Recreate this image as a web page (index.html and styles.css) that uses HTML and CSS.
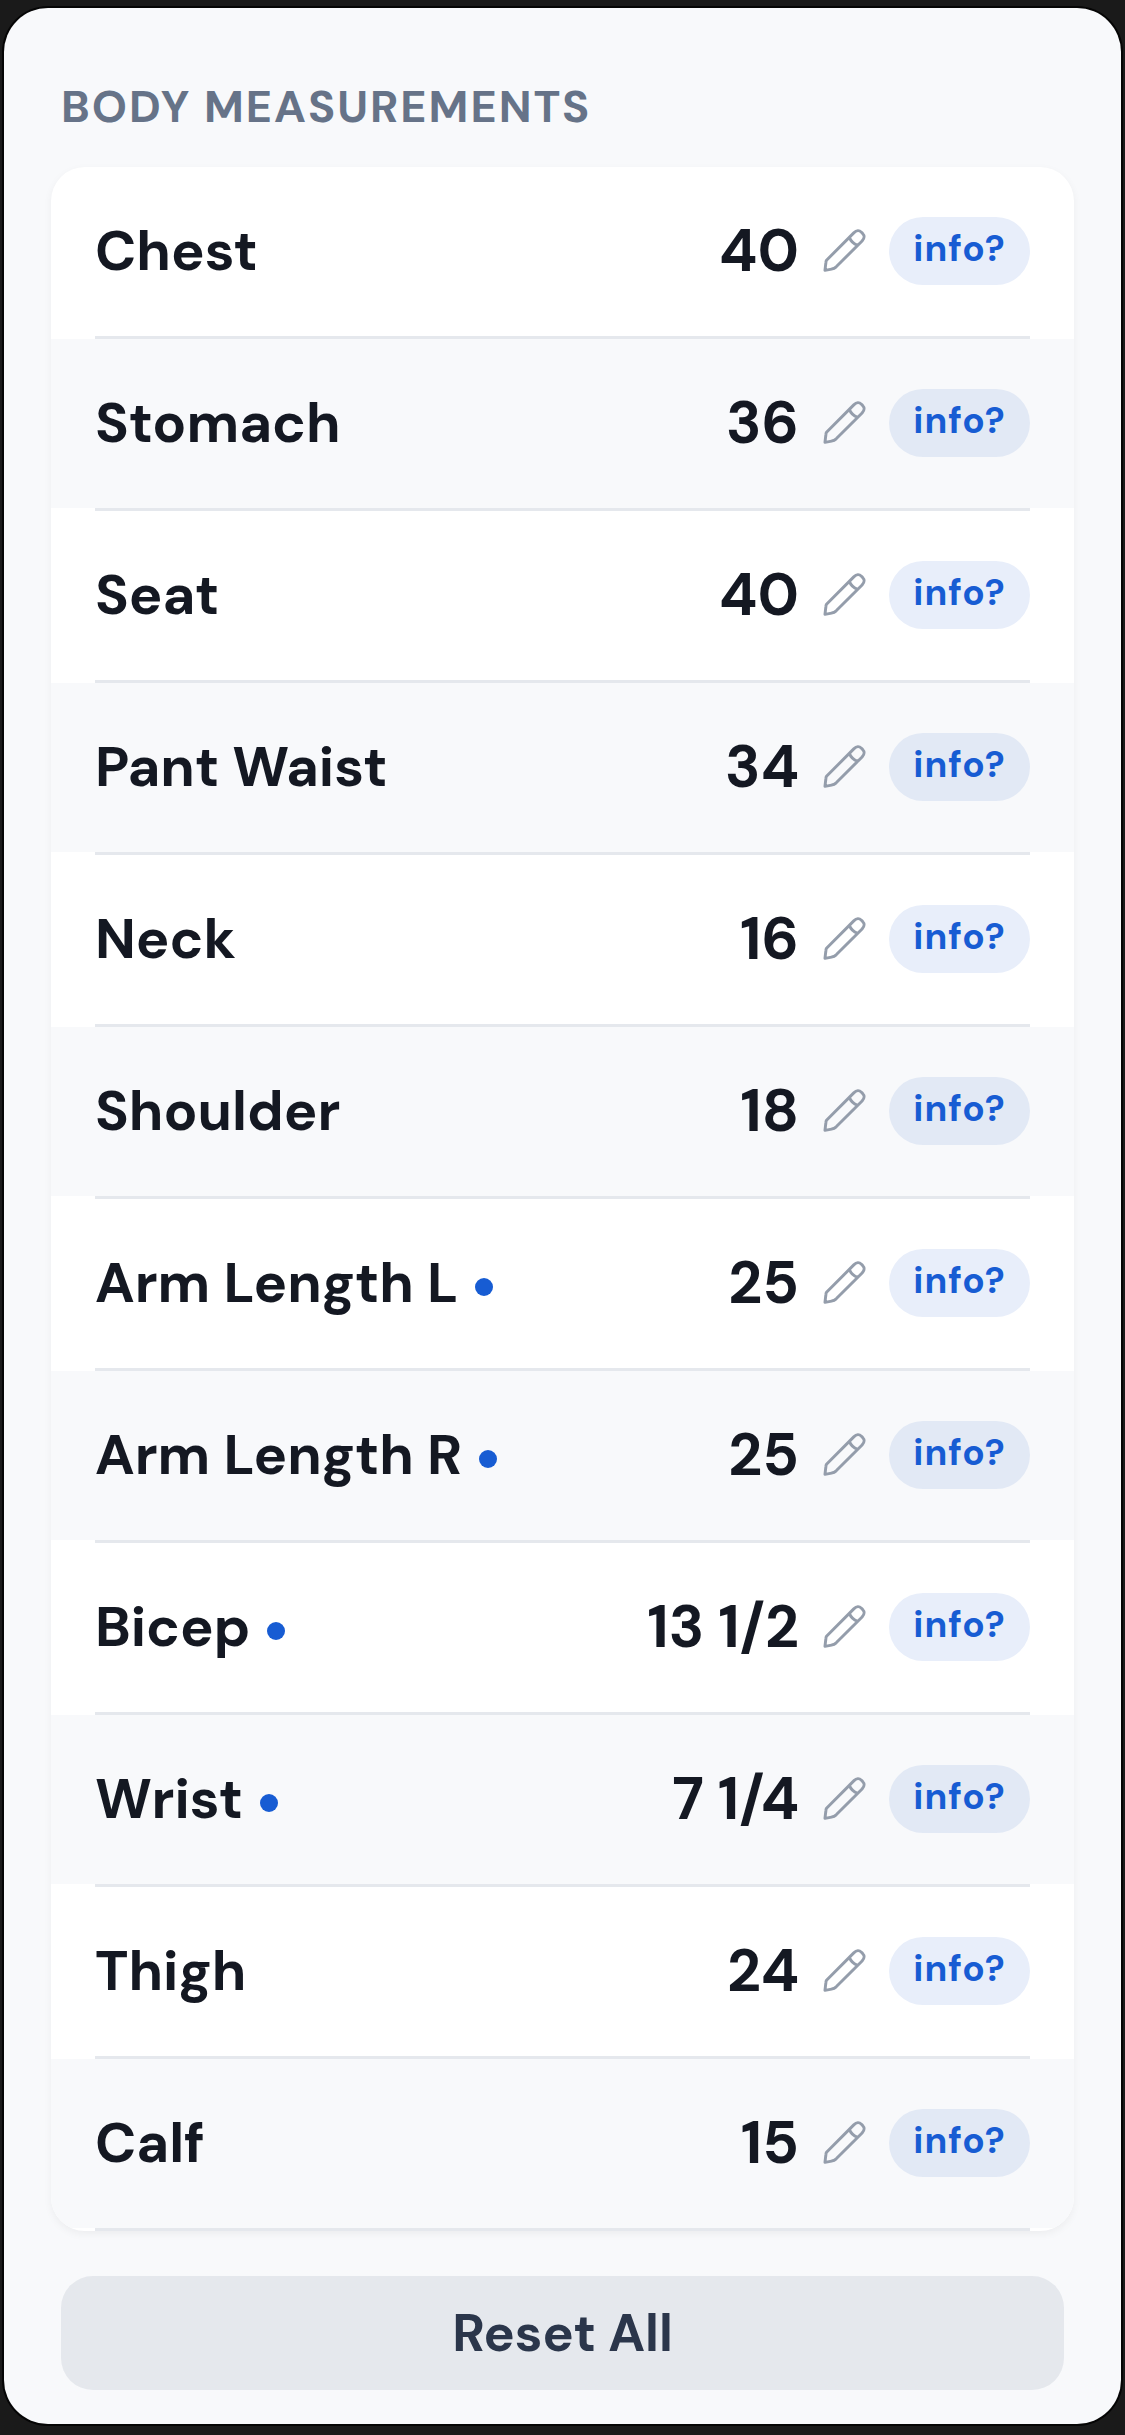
FILE: index.html
```html
<!DOCTYPE html>
<html lang="en">
<head>
  <meta charset="UTF-8" />
  <meta name="viewport" content="width=device-width, initial-scale=1" />
  <title>Body Measurements</title>
  <link rel="stylesheet" href="styles.css">
</head>
<body>
  <!-- Shared pencil icon -->
  <svg class="sprite" aria-hidden="true">
    <symbol id="pencil" viewBox="0 0 44 44">
      <path d="M3.6 32 L31.5 4 C34.5 1 37 1 39.3 3.3 L40.5 4.5 C42.8 7 42.8 9 40 12.2 L13.5 38.7 Q11.5 40.6 8.8 41 L2 42.3 L3 34 Q3.1 32.6 3.6 32 Z M27 8.5 Q29 14.5 35.5 16.7" />
    </symbol>
  </svg>

  <main class="panel">
    <h1>BODY MEASUREMENTS</h1>

    <ul class="measurements">
      <li>
        <div class="row">
          <span class="name">Chest</span>
          <span class="value">40</span>
          <button class="edit" aria-label="Edit Chest"><svg><use href="#pencil" /></svg></button>
          <button class="info">info?</button>
        </div>
      </li>
      <li>
        <div class="row">
          <span class="name">Stomach</span>
          <span class="value">36</span>
          <button class="edit" aria-label="Edit Stomach"><svg><use href="#pencil" /></svg></button>
          <button class="info">info?</button>
        </div>
      </li>
      <li>
        <div class="row">
          <span class="name">Seat</span>
          <span class="value">40</span>
          <button class="edit" aria-label="Edit Seat"><svg><use href="#pencil" /></svg></button>
          <button class="info">info?</button>
        </div>
      </li>
      <li>
        <div class="row">
          <span class="name">Pant Waist</span>
          <span class="value">34</span>
          <button class="edit" aria-label="Edit Pant Waist"><svg><use href="#pencil" /></svg></button>
          <button class="info">info?</button>
        </div>
      </li>
      <li>
        <div class="row">
          <span class="name">Neck</span>
          <span class="value">16</span>
          <button class="edit" aria-label="Edit Neck"><svg><use href="#pencil" /></svg></button>
          <button class="info">info?</button>
        </div>
      </li>
      <li>
        <div class="row">
          <span class="name">Shoulder</span>
          <span class="value">18</span>
          <button class="edit" aria-label="Edit Shoulder"><svg><use href="#pencil" /></svg></button>
          <button class="info">info?</button>
        </div>
      </li>
      <li>
        <div class="row">
          <span class="name dot">Arm Length L</span>
          <span class="value">25</span>
          <button class="edit" aria-label="Edit Arm Length L"><svg><use href="#pencil" /></svg></button>
          <button class="info">info?</button>
        </div>
      </li>
      <li>
        <div class="row">
          <span class="name dot">Arm Length R</span>
          <span class="value">25</span>
          <button class="edit" aria-label="Edit Arm Length R"><svg><use href="#pencil" /></svg></button>
          <button class="info">info?</button>
        </div>
      </li>
      <li>
        <div class="row">
          <span class="name dot">Bicep</span>
          <span class="value">13 1/2</span>
          <button class="edit" aria-label="Edit Bicep"><svg><use href="#pencil" /></svg></button>
          <button class="info">info?</button>
        </div>
      </li>
      <li>
        <div class="row">
          <span class="name dot">Wrist</span>
          <span class="value">7 1/4</span>
          <button class="edit" aria-label="Edit Wrist"><svg><use href="#pencil" /></svg></button>
          <button class="info">info?</button>
        </div>
      </li>
      <li>
        <div class="row">
          <span class="name">Thigh</span>
          <span class="value">24</span>
          <button class="edit" aria-label="Edit Thigh"><svg><use href="#pencil" /></svg></button>
          <button class="info">info?</button>
        </div>
      </li>
      <li>
        <div class="row">
          <span class="name">Calf</span>
          <span class="value">15</span>
          <button class="edit" aria-label="Edit Calf"><svg><use href="#pencil" /></svg></button>
          <button class="info">info?</button>
        </div>
      </li>
    </ul>

    <button class="reset">Reset All</button>
  </main>
</body>
</html>
```
FILE: styles.css
```css
* {
  box-sizing: border-box;
}

body {
  margin: 0;
  padding: 8px 4px 10px;
  background: #1a1a1a;
  font-family: "DM Sans", Inter, sans-serif;
  font-optical-sizing: none;
  color: #141822;
}

.sprite {
  display: none;
}

button {
  padding: 0;
  border: none;
  background: none;
  font-family: inherit;
  cursor: pointer;
}

.panel {
  padding: 73px 57px 34px;
  border-radius: 44px;
  background: #f8f9fb;
  box-shadow: 0 0 0 2px #050505;
}

h1 {
  margin: 0;
  font-size: 45px;
  line-height: 52px;
  font-weight: 700;
  letter-spacing: 2px;
  color: #667388;
}

.measurements {
  margin: 34px -10px 45px;
  padding: 0;
  list-style: none;
  border-radius: 34px;
  background: #fff;
  box-shadow: 0 3px 9px rgba(0, 0, 0, 0.05);
  overflow: hidden;
}

.row {
  display: flex;
  align-items: center;
  min-height: 169px;
  padding: 0 44px 2px;
}

li:nth-child(even) .row {
  background: #f8f9fb;
}

/* inset divider under each row */
li::after {
  content: "";
  display: block;
  height: 3px;
  margin: 0 44px;
  background: #e5e8ed;
}

.name {
  display: flex;
  align-items: center;
  margin-right: auto;
  font-size: 56px;
  line-height: 64px;
  font-weight: 700;
}

.dot::after {
  content: "";
  width: 18px;
  height: 18px;
  margin: 8px 0 0 17px;
  border-radius: 50%;
  background: #175cd3;
}

.value {
  font-size: 59px;
  line-height: 64px;
  font-weight: 700;
}

.edit {
  display: flex;
  margin: 0 23px 0 24px;
}

.edit svg {
  width: 43px;
  height: 43px;
  fill: none;
  stroke: #949dab;
  stroke-width: 3;
  stroke-linejoin: round;
  stroke-linecap: round;
}

.info {
  width: 141px;
  height: 68px;
  padding-bottom: 5px;
  border-radius: 34px;
  background: #e8eefa;
  color: #175cd3;
  font-size: 37px;
  font-weight: 700;
  letter-spacing: 1px;
}

li:nth-child(even) .info {
  background: #e2e9f5;
}

.reset {
  display: block;
  width: 100%;
  height: 114px;
  border-radius: 32px;
  background: #e5e8ed;
  color: #2b364b;
  font-size: 52px;
  font-weight: 700;
}
```
